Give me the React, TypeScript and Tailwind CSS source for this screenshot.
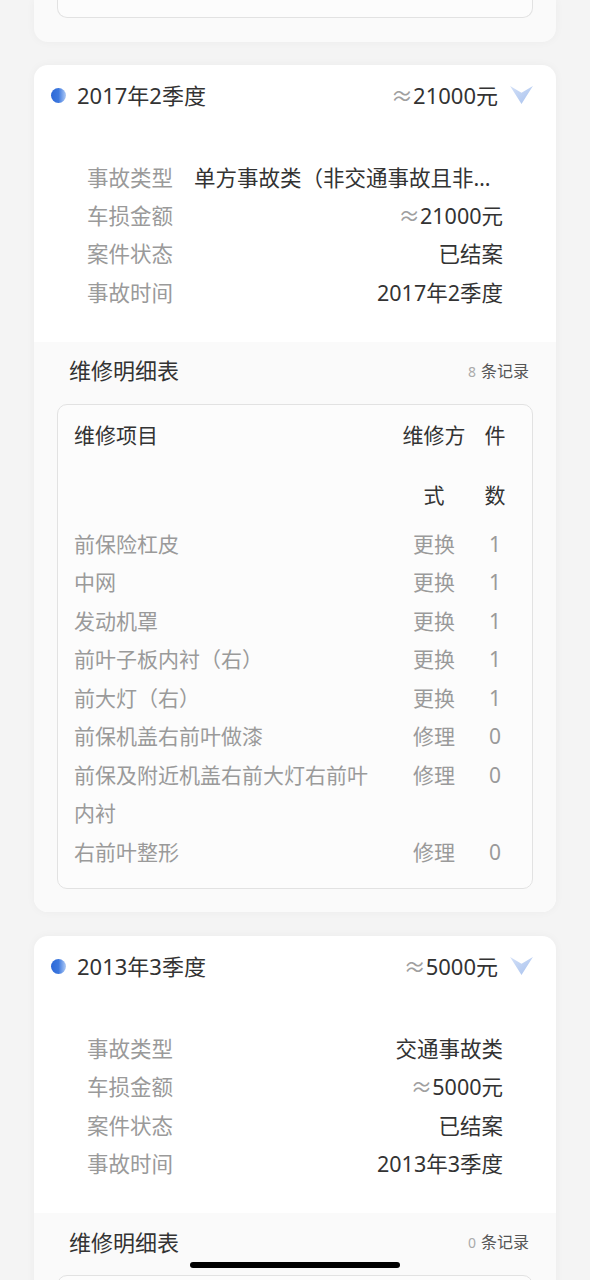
import React from "react";

type Item = { name: string; method: string; qty: number };
type Rec = {
  title: string;
  amount: string;
  type: string;
  status: string;
  items: Item[];
};

const records: Rec[] = [
  {
    title: "2017年2季度",
    amount: "21000元",
    type: "单方事故类（非交通事故且非自然灾害类）",
    status: "已结案",
    items: [
      { name: "前保险杠皮", method: "更换", qty: 1 },
      { name: "中网", method: "更换", qty: 1 },
      { name: "发动机罩", method: "更换", qty: 1 },
      { name: "前叶子板内衬（右）", method: "更换", qty: 1 },
      { name: "前大灯（右）", method: "更换", qty: 1 },
      { name: "前保机盖右前叶做漆", method: "修理", qty: 0 },
      { name: "前保及附近机盖右前大灯右前叶内衬", method: "修理", qty: 0 },
      { name: "右前叶整形", method: "修理", qty: 0 },
    ],
  },
  {
    title: "2013年3季度",
    amount: "5000元",
    type: "交通事故类",
    status: "已结案",
    items: [],
  },
];

function Chevron() {
  return (
    <svg width="23" height="19" viewBox="0 0 24 20" className="ml-[12px] shrink-0">
      <defs>
        <linearGradient id="chev" x1="0" y1="0" x2="1" y2="1">
          <stop offset="0" stopColor="#d3e0f7" />
          <stop offset="1" stopColor="#a7c1ee" />
        </linearGradient>
      </defs>
      <polygon points="0,0 12,7 24,0 12,19" fill="url(#chev)" />
    </svg>
  );
}

function InfoRow({ label, children }: { label: string; children: React.ReactNode }) {
  return (
    <div className="flex items-center h-[38.2px] leading-[38.2px]">
      <div className="shrink-0 text-[21.5px] text-[#9a9a9a]">{label}</div>
      <div className="flex-1 min-w-0 pl-[21px] text-right text-[21.5px] text-[#333] truncate">
        {children}
      </div>
    </div>
  );
}

function Card({ rec }: { rec: Rec }) {
  return (
    <div className="rounded-[14px] bg-white overflow-hidden shadow-[0_0_10px_rgba(0,0,0,0.04)]">
      <div className="h-[60px] flex items-center pl-[17px] pr-[23px]">
        <div className="w-[15px] h-[15px] rounded-full bg-linear-to-r from-[#2c68d8] via-[#3d78de] to-[#b0caf4] shrink-0" />
        <div className="ml-[11px] text-[22px] text-[#333] leading-[30px]">{rec.title}</div>
        <div className="flex-1" />
        <div className="text-[22px] leading-[30px] text-[#333]">
          <span className="text-[#a0a0a0]">≈</span>
          {rec.amount}
        </div>
        <Chevron />
      </div>
      <div className="px-[53px] pt-[34px] pb-[30px]">
        <InfoRow label="事故类型">{rec.type}</InfoRow>
        <InfoRow label="车损金额">
          <span className="text-[#a0a0a0]">≈</span>
          {rec.amount}
        </InfoRow>
        <InfoRow label="案件状态">{rec.status}</InfoRow>
        <InfoRow label="事故时间">{rec.title}</InfoRow>
      </div>
      <div className="bg-[#fafafa] px-[23px] pt-[14px] pb-[23px]">
        <div className="flex items-center justify-between pl-[12px] pr-[4px] h-[30px]">
          <div className="text-[22px] text-[#333]">维修明细表</div>
          <div className="flex items-baseline">
            <span className="text-[14px] text-[#aaa] mr-[5px]">{rec.items.length}</span>
            <span className="text-[16px] text-[#555]">条记录</span>
          </div>
        </div>
        <div className="mt-[18px] rounded-[10px] border border-[#e2e2e2] bg-[#fcfcfc] pl-[16px] pr-[25px] pb-[17px]">
          <div className="grid grid-cols-[310px_66px_22px] gap-x-[17px] text-[21px] leading-[60px] text-[#333]">
            <div>维修项目</div>
            <div className="text-center break-all">维修方式</div>
            <div className="text-center break-all">件数</div>
          </div>
          {rec.items.map((it, i) => (
            <div
              key={i}
              className="grid grid-cols-[310px_66px_22px] gap-x-[17px] text-[21px] leading-[38.5px] text-[#9a9a9a]"
            >
              <div>{it.name}</div>
              <div className="text-center">{it.method}</div>
              <div className="text-center">{it.qty}</div>
            </div>
          ))}
          {rec.items.length === 0 && <div className="h-[120px]" />}
        </div>
      </div>
    </div>
  );
}

export default function App() {
  return (
    <div className="relative h-[1280px] overflow-hidden bg-[#f4f4f4] px-[34px] font-['Noto_Sans','Noto_Sans_CJK_SC',sans-serif]">
      <div className="rounded-b-[14px] bg-[#fafafa] px-[23px] pb-[24px] shadow-[0_0_10px_rgba(0,0,0,0.04)]">
        <div className="h-[18px] rounded-b-[10px] border-x border-b border-[#e2e2e2] bg-[#fcfcfc]" />
      </div>
      <div className="mt-[23px] flex flex-col gap-[24px]">
        {records.map((r, i) => (
          <Card key={i} rec={r} />
        ))}
      </div>
      <div className="absolute left-1/2 top-[1262px] -translate-x-1/2 w-[210px] h-[6px] rounded-full bg-black" />
    </div>
  );
}
